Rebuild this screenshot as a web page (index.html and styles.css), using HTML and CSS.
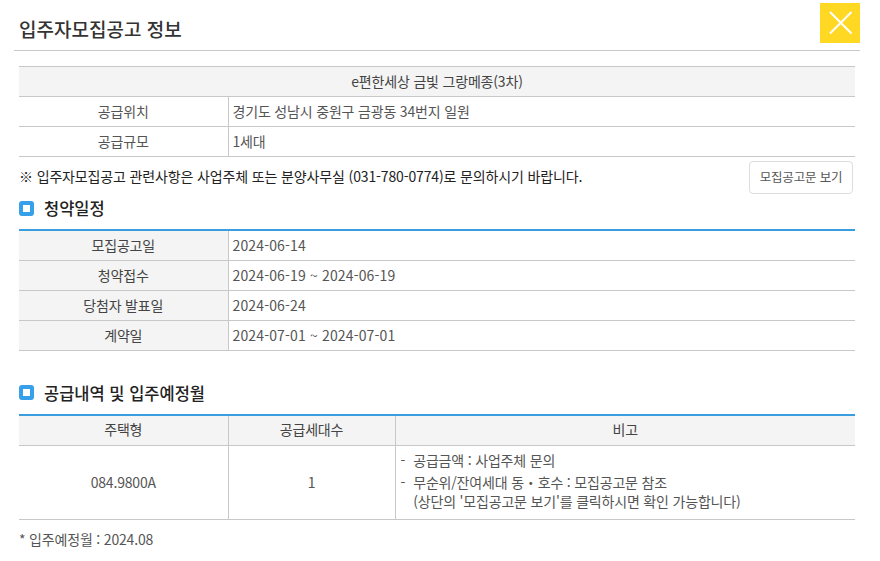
FILE: index.html
```html
<!DOCTYPE html>
<html lang="ko">
<head>
  <meta charset="UTF-8" />
  <title>입주자모집공고 정보</title>
  <link rel="stylesheet" href="styles.css">
</head>
<body>
  <div class="popup">
    <div class="popup-head">
      <h1>입주자모집공고 정보</h1>
      <a class="close-btn" href="#" title="닫기">
        <svg width="40" height="40" viewBox="0 0 40 40"><path d="M10 9 L31.5 30.5 M31.5 9 L10 30.5" stroke="#fff" stroke-width="2" fill="none"/></svg>
      </a>
    </div>

    <div class="popup-body">
      <table class="tbl tbl-info">
        <colgroup><col class="col-a"><col></colgroup>
        <tr><th colspan="2" class="title-cell">e편한세상 금빛 그랑메종(3차)</th></tr>
        <tr><td class="center">공급위치</td><td>경기도 성남시 중원구 금광동 34번지 일원</td></tr>
        <tr><td class="center">공급규모</td><td>1세대</td></tr>
      </table>

      <div class="notice">
        <p>※ 입주자모집공고 관련사항은 사업주체 또는 분양사무실 (031-780-0774)로 문의하시기 바랍니다.</p>
        <a class="btn" href="#">모집공고문 보기</a>
      </div>

      <h2 class="sec-title sec-first"><span class="bullet"></span>청약일정</h2>
      <table class="tbl tbl-blue tbl-dates">
        <colgroup><col class="col-a"><col></colgroup>
        <tr><th>모집공고일</th><td>2024-06-14</td></tr>
        <tr><th>청약접수</th><td>2024-06-19 ~ 2024-06-19</td></tr>
        <tr><th>당첨자 발표일</th><td>2024-06-24</td></tr>
        <tr><th>계약일</th><td>2024-07-01 ~ 2024-07-01</td></tr>
      </table>

      <h2 class="sec-title sec-second"><span class="bullet"></span>공급내역 및 입주예정월</h2>
      <table class="tbl tbl-blue tbl-supply">
        <colgroup><col class="col-a"><col class="col-b"><col></colgroup>
        <tr><th>주택형</th><th>공급세대수</th><th>비고</th></tr>
        <tr class="row-supply">
          <td class="center">084.9800A</td>
          <td class="center">1</td>
          <td class="remark">
            <div class="remark-item"><span>-</span><span>공급금액 : 사업주체 문의</span></div>
            <div class="remark-item"><span>-</span><span>무순위/잔여세대 동・호수 : 모집공고문 참조<br>(상단의 '모집공고문 보기'를 클릭하시면 확인 가능합니다)</span></div>
          </td>
        </tr>
      </table>

      <p class="foot-note">* 입주예정월 : 2024.08</p>
    </div>
  </div>
</body>
</html>
```

FILE: styles.css
```css
* {
  box-sizing: border-box;
}

body {
  margin: 0;
  background: #fff;
  color: #555;
  font-family: "Noto Sans CJK KR", "Noto Sans", sans-serif;
  font-size: 14px;
  letter-spacing: -0.18px;
}

.popup {
  width: 846px;
  margin-left: 14px;
}

.popup-head {
  height: 51px;
  padding: 3px 0 0 5px;
  border-bottom: 1px solid #c8c8c8;
  display: flex;
  justify-content: space-between;
  align-items: flex-start;
}

.popup-head h1 {
  margin: 12px 0 0;
  font-size: 19px;
  line-height: 28px;
  font-weight: 500;
  letter-spacing: 0;
  color: #333;
}

.close-btn {
  display: block;
  width: 40px;
  height: 40px;
  background: #ffd824;
}

.close-btn svg {
  display: block;
}

.popup-body {
  padding: 15px 5px 0;
}

.tbl {
  width: 836px;
  border-collapse: collapse;
  table-layout: fixed;
  border-top: 1px solid #c8c8c8;
}

.col-a {
  width: 209px;
}

.col-b {
  width: 167px;
}

.tbl th,
.tbl td {
  height: 30px;
  padding: 0 4px 2px;
  border-bottom: 1px solid #c8c8c8;
  border-left: 1px solid #c8c8c8;
  font-weight: 400;
  line-height: 18px;
  text-align: left;
}

.tbl th:first-child,
.tbl td:first-child {
  border-left: 0;
}

.tbl th {
  background: #f4f4f4;
  text-align: center;
  color: #444;
}

.tbl .center {
  text-align: center;
}

.tbl-blue {
  border-top: 2px solid #3a9ddf;
}

.tbl-dates th,
.tbl-dates td {
  padding-bottom: 0;
}

.tbl-dates td {
  letter-spacing: 0.15px;
}

.tbl-supply th {
  height: 31px;
}

.notice {
  height: 39px;
  display: flex;
  justify-content: space-between;
  align-items: center;
  padding-right: 2px;
}

.notice p {
  margin: 0 0 2px;
  letter-spacing: -0.14px;
  color: #222;
}

.btn {
  width: 104px;
  height: 33px;
  margin-top: 2px;
  border: 1px solid #ddd;
  border-radius: 4px;
  color: #555;
  font-size: 12.5px;
  line-height: 30px;
  text-align: center;
  text-decoration: none;
}

.sec-title {
  display: flex;
  align-items: center;
  gap: 10px;
  margin: 0;
  font-size: 16.5px;
  line-height: 24px;
  font-weight: 500;
  letter-spacing: 0;
  color: #222;
}

.sec-first {
  margin: 0 0 9px;
}

.sec-second {
  margin: 30px 0 9px;
}

.bullet {
  width: 15px;
  height: 15px;
  border: 4px solid #36a0ea;
  border-radius: 3px;
  background: #fff;
}

.row-supply td {
  height: 74px;
}

.tbl .remark {
  padding-bottom: 3px;
  line-height: 19px;
}

.remark-item {
  display: flex;
  gap: 8px;
  padding-left: 1px;
  margin-bottom: 3px;
}

.remark-item:last-child {
  margin-bottom: 0;
}

.foot-note {
  margin: 9px 0 0;
  line-height: 20px;
}
```
